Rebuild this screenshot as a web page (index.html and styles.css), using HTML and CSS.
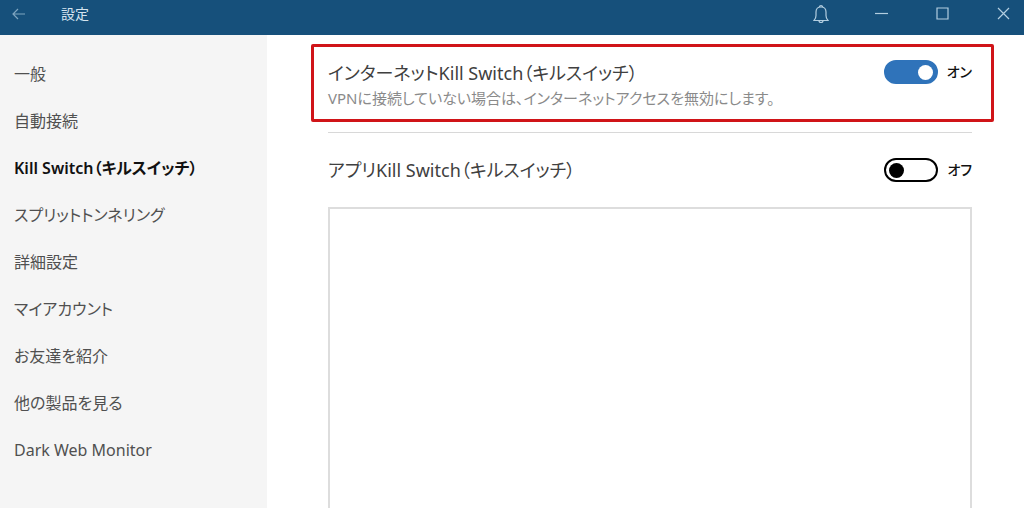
FILE: index.html
```html
<!DOCTYPE html>
<html lang="ja">
<head>
  <meta charset="UTF-8" />
  <meta name="viewport" content="width=device-width, initial-scale=1.0"/>
  <title>設定</title>
  <link rel="stylesheet" href="styles.css">
</head>
<body>
  <header class="titlebar">
    <button class="icon-btn back" type="button" aria-label="戻る">
      <svg width="14" height="12" viewBox="0 0 14 12"><path d="M13 6H1M6 1L1 6l5 5"/></svg>
    </button>
    <h1 class="title">設定</h1>
    <div class="window-buttons">
      <button class="icon-btn" type="button" aria-label="通知">
        <svg width="16" height="20" viewBox="0 0 16 20"><path d="M1 16.500c1.500-1.500 2-3 2-5V8c0-3 2-5 5-5s5 2 5 5v3.500c0 2 .5 3.500 2 5zM6.500 3a1.500 1.500 0 1 1 3 0M6 16.500a2 2 0 0 0 4 0"/></svg>
      </button>
      <button class="icon-btn" type="button" aria-label="最小化">
        <svg width="13" height="13" viewBox="0 0 13 13"><path d="M0 6.500h13"/></svg>
      </button>
      <button class="icon-btn" type="button" aria-label="最大化">
        <svg width="13" height="13" viewBox="0 0 13 13"><path d="M1 1h11v11H1z"/></svg>
      </button>
      <button class="icon-btn" type="button" aria-label="閉じる">
        <svg width="13" height="13" viewBox="0 0 13 13"><path d="M1 1l11 11M12 1L1 12"/></svg>
      </button>
    </div>
  </header>

  <div class="layout">
    <nav class="sidebar">
      <a href="#general">一般</a>
      <a href="#auto">自動接続</a>
      <a href="#killswitch" class="active" aria-current="page">Kill Switch（キルスイッチ）</a>
      <a href="#split">スプリットトンネリング</a>
      <a href="#advanced">詳細設定</a>
      <a href="#account">マイアカウント</a>
      <a href="#refer">お友達を紹介</a>
      <a href="#products">他の製品を見る</a>
      <a href="#darkweb">Dark Web Monitor</a>
    </nav>

    <main class="content">
      <section class="setting highlight">
        <div class="setting-text">
          <label class="name" for="internetSwitch">インターネットKill Switch（キルスイッチ）</label>
          <p class="desc">VPNに接続していない場合は、インターネットアクセスを無効にします。</p>
        </div>
        <div class="toggle">
          <input type="checkbox" role="switch" id="internetSwitch" checked>
          <span class="state">オン</span>
        </div>
      </section>

      <hr class="divider">

      <section class="setting">
        <div class="setting-text">
          <label class="name" for="appSwitch">アプリKill Switch（キルスイッチ）</label>
        </div>
        <div class="toggle">
          <input type="checkbox" role="switch" id="appSwitch">
          <span class="state">オフ</span>
        </div>
      </section>

      <div class="app-list"></div>
    </main>
  </div>
</body>
</html>
```
FILE: styles.css
```css
* {
  box-sizing: border-box;
}

body {
  margin: 0;
  min-height: 100vh;
  display: flex;
  flex-direction: column;
  background: #fff;
  color: #444;
  font-family: "Noto Sans", "Noto Sans CJK JP", sans-serif;
  font-size: 16px;
  line-height: 24px;
  /* proportional kana */
  font-feature-settings: "palt";
}

.titlebar {
  display: flex;
  align-items: center;
  height: 35px;
  padding-bottom: 8px;
  background: #16507b;
  color: #d5e4ef;
}

.title {
  margin: 0 0 0 24px;
  font-size: 14px;
  font-weight: 400;
}

.window-buttons {
  display: flex;
  gap: 20px;
  margin-left: auto;
}

.icon-btn {
  display: flex;
  align-items: center;
  justify-content: center;
  width: 41px;
  height: 27px;
  padding: 0;
  border: 0;
  background: none;
}

.icon-btn svg {
  fill: none;
  stroke: #b3cee0;
  stroke-width: 1.2;
}

.back {
  width: 37px;
}

.back svg {
  stroke: #7fa5c0;
}

.layout {
  flex: 1;
  display: flex;
}

.sidebar {
  width: 267px;
  flex-shrink: 0;
  padding: 15px 14px;
  background: #f5f5f5;
}

.sidebar a {
  display: flex;
  align-items: center;
  height: 47px;
  color: #505050;
  text-decoration: none;
}

.sidebar .active {
  color: #111;
  font-weight: 600;
}

.content {
  flex: 1;
  display: flex;
  flex-direction: column;
  padding: 9px 52px 0 61px;
}

.setting {
  display: flex;
  align-items: center;
  justify-content: space-between;
  height: 74px;
}

.highlight {
  align-items: flex-start;
  height: 78px;
  margin: 0 -22px 0 -17px;
  padding: 13px 19px 0 14px;
  border: 3px solid #d01418;
  border-radius: 2px;
}

.name {
  display: block;
  color: #404040;
  font-size: 18px;
  line-height: 26px;
}

.desc {
  margin: 0;
  color: #8a8a8a;
  font-size: 15px;
}

.toggle {
  display: flex;
  align-items: center;
  gap: 9px;
  color: #111;
}

.toggle input {
  appearance: none;
  display: flex;
  align-items: center;
  width: 54px;
  height: 24px;
  margin: 0;
  padding: 0 3px;
  border: 2px solid #000;
  border-radius: 12px;
}

.toggle input::before {
  content: "";
  width: 15px;
  height: 15px;
  border-radius: 50%;
  background: #000;
}

.toggle input:checked {
  justify-content: flex-end;
  border-color: #2f73ba;
  background: #2f73ba;
}

.toggle input:checked::before {
  background: #fff;
}

.state {
  font-size: 14px;
  font-weight: 500;
}

.divider {
  width: 100%;
  height: 1px;
  margin: 10px 0 0;
  border: 0;
  background: #d8d8d8;
}

.app-list {
  flex: 1;
  border: 2px solid #ddd;
  border-bottom: 0;
}
```
